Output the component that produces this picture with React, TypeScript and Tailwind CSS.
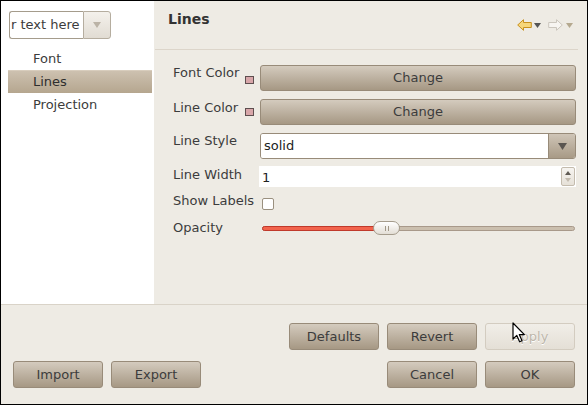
import type { ReactNode } from 'react'

function Btn({ children, disabled, wide }: { children: ReactNode; disabled?: boolean; wide?: boolean }) {
  if (disabled) {
    return (
      <div className="flex h-[27px] w-[90px] items-center justify-center rounded-[3px] border border-[#d3ccc0] bg-linear-to-b from-[#f1eee8] to-[#e4dfd6] text-[13px] text-[#bdb6aa] [text-shadow:0_1px_0_#ffffff]">
        {children}
      </div>
    )
  }
  return (
    <div
      className={
        wide
          ? 'flex h-[26px] w-[316px] items-center justify-center rounded-[3px] border border-[#988b79] bg-linear-to-b from-[#d4cbbe] to-[#a69884] text-[13px] text-[#3c3c3c]'
          : 'flex h-[27px] w-[90px] items-center justify-center rounded-[3px] border border-[#988b79] bg-linear-to-b from-[#d4cbbe] to-[#a69884] text-[13px] text-[#3c3c3c]'
      }
    >
      {children}
    </div>
  )
}

function Swatch() {
  return <div className="h-[8px] w-[9px] border border-[#5e4f4f] bg-[#d8a6a9]" />
}

export default function App() {
  return (
    <div className="relative flex h-[405px] w-[588px] flex-col border border-black bg-[#eeebe4] font-['DejaVu_Sans',sans-serif] text-[#3c3c3c]">
      {/* top area */}
      <div className="flex h-[304px] border-b border-[#d9d3c8]">
        {/* left tree */}
        <div className="w-[153px] bg-white">
          <div className="ml-2 mt-[10px] flex h-[28px] w-[102px]">
            <div className="flex flex-1 items-center overflow-hidden rounded-l-[3px] border border-r-0 border-[#a59c8c] bg-white pl-[1px] text-[13px] whitespace-nowrap">
              r text here
            </div>
            <div className="flex w-[28px] items-center justify-center rounded-r-[3px] border border-[#b5ad9f] bg-linear-to-b from-[#f4f1ec] to-[#e1dcd3]">
              <svg width="8" height="6" viewBox="0 0 8 6">
                <path d="M0 0H8L4 6Z" fill="#bbb3a6" />
              </svg>
            </div>
          </div>
          <div className="mt-[8px] ml-[7px] mr-[2px] flex flex-col text-[13px]">
            <div className="flex h-[23px] items-center pl-[25px]">Font</div>
            <div className="flex h-[23px] items-center border-t border-[#d8cdbd] bg-linear-to-b from-[#cdc1b0] to-[#b5a68f] pl-[25px] text-[#2e2e2e]">
              Lines
            </div>
            <div className="flex h-[23px] items-center pl-[25px]">Projection</div>
          </div>
        </div>

        {/* right form */}
        <div className="flex flex-1 flex-col">
          <div className="flex h-[48px] items-start justify-between pl-[14px] pr-[14px]">
            <div className="mt-[10px] text-[14px] font-bold leading-[17px] text-[#333]">Lines</div>
            <div className="mt-[18px] flex items-center">
              <svg width="15" height="12" viewBox="0 0 15 12">
                <path d="M0.7 6 L6.5 0.7 V3.5 H14.3 V8.5 H6.5 V11.3 Z" fill="#f6d67a" stroke="#c8901e" strokeWidth="1" strokeLinejoin="round" />
              </svg>
              <svg className="ml-[2px]" width="7" height="5" viewBox="0 0 7 5">
                <path d="M0 0H7L3.5 5Z" fill="#555" />
              </svg>
              <svg className="ml-[7px]" width="15" height="12" viewBox="0 0 15 12">
                <path d="M14.3 6 L8.5 0.7 V3.5 H0.7 V8.5 H8.5 V11.3 Z" fill="#f7f5f1" stroke="#cbc6bd" strokeWidth="1" strokeLinejoin="round" />
              </svg>
              <svg className="ml-[3px]" width="7" height="5" viewBox="0 0 7 5">
                <path d="M0 0H7L3.5 5Z" fill="#b5a98f" />
              </svg>
            </div>
          </div>
          <div className="ml-[1px] mr-[9px] h-px bg-[#dcd5ca]" />

          <div className="mt-[15px] flex flex-col pl-[19px] pr-[11px] text-[13px] leading-4">
            {/* Font Color */}
            <div className="flex h-[26px] items-start">
              <div className="w-[72px]">Font Color</div>
              <div className="w-[15px] pt-[11px]">
                <Swatch />
              </div>
              <Btn wide>Change</Btn>
            </div>
            {/* Line Color */}
            <div className="mt-[8px] flex h-[26px] items-start">
              <div className="w-[72px] pt-[1px]">Line Color</div>
              <div className="w-[15px] pt-[9px]">
                <Swatch />
              </div>
              <Btn wide>Change</Btn>
            </div>
            {/* Line Style */}
            <div className="mt-[8px] flex h-[26px] items-start">
              <div className="w-[87px]">Line Style</div>
              <div className="flex h-[26px] w-[316px] overflow-hidden rounded-[3px] border border-[#988b79]">
                <div className="flex flex-1 items-center bg-white pl-[3px] text-[#222]">solid</div>
                <div className="flex w-[27px] items-center justify-center border-l border-[#988b79] bg-linear-to-b from-[#cfc5b7] to-[#a89a86]">
                  <svg width="9" height="7" viewBox="0 0 9 7">
                    <path d="M0 0H9L4.5 7Z" fill="#5a5550" />
                  </svg>
                </div>
              </div>
            </div>
            {/* Line Width */}
            <div className="mt-[7px] flex h-[21px] items-start">
              <div className="w-[86px] pt-[1px]">Line Width</div>
              <div className="flex h-[21px] w-[317px] items-center bg-white pl-[3px] pr-[1px] text-[#222]">
                <span className="mt-[3px] flex-1">1</span>
                <div className="flex h-[19px] w-[14px] flex-col items-center justify-center gap-[3px] rounded-[2px] border border-[#c4bcae] bg-linear-to-b from-[#f6f4f0] to-[#e6e1d8]">
                  <svg width="6" height="4" viewBox="0 0 6 4">
                    <path d="M0 4H6L3 0Z" fill="#5f5a53" />
                  </svg>
                  <svg width="6" height="4" viewBox="0 0 6 4">
                    <path d="M0 0H6L3 4Z" fill="#c3bbae" />
                  </svg>
                </div>
              </div>
            </div>
            {/* Show Labels */}
            <div className="mt-[5px] flex h-[24px] items-start">
              <div className="w-[89px] pt-[1px]">Show Labels</div>
              <div className="mt-[6px] h-[12px] w-[12px] rounded-[2px] border border-[#9a907f] bg-white" />
            </div>
            {/* Opacity */}
            <div className="mt-[3px] flex h-[18px] items-start">
              <div className="w-[89px] pt-[1px]">Opacity</div>
              <div className="relative h-[16px] w-[313px]">
                <div className="absolute left-0 right-0 top-[7px] h-[5px] rounded-full border border-[#a8998a] bg-[#cbbfae]" />
                <div className="absolute left-0 top-[7px] h-[5px] w-[114px] rounded-l-full border border-[#c0392b] bg-[#f2634c]" />
                <div className="absolute left-[111px] top-[2px] flex h-[14px] w-[27px] items-center justify-center gap-[2px] rounded-full border border-[#a59c8c] bg-linear-to-b from-[#ffffff] to-[#e3ded5]">
                  <div className="h-[5px] w-px bg-[#a09786]" />
                  <div className="h-[5px] w-px bg-[#a09786]" />
                </div>
              </div>
            </div>
          </div>
        </div>
      </div>

      {/* bottom buttons */}
      <div className="flex flex-1 flex-col px-[12px] pt-[18px]">
        <div className="flex justify-end gap-2">
          <Btn>Defaults</Btn>
          <Btn>Revert</Btn>
          <Btn disabled>Apply</Btn>
        </div>
        <div className="mt-[11px] flex justify-between">
          <div className="flex gap-2">
            <Btn>Import</Btn>
            <Btn>Export</Btn>
          </div>
          <div className="flex gap-2">
            <Btn>Cancel</Btn>
            <Btn>OK</Btn>
          </div>
        </div>
      </div>

      {/* mouse pointer */}
      <svg className="absolute left-[511px] top-[321px]" width="14" height="22" viewBox="0 0 14 22">
        <path d="M1 1 V17 L4.8 13.4 L7.6 19.8 L10 18.8 L7.3 12.6 H12.4 Z" fill="#ffffff" stroke="#000000" strokeWidth="1.2" strokeLinejoin="round" />
      </svg>
    </div>
  )
}
